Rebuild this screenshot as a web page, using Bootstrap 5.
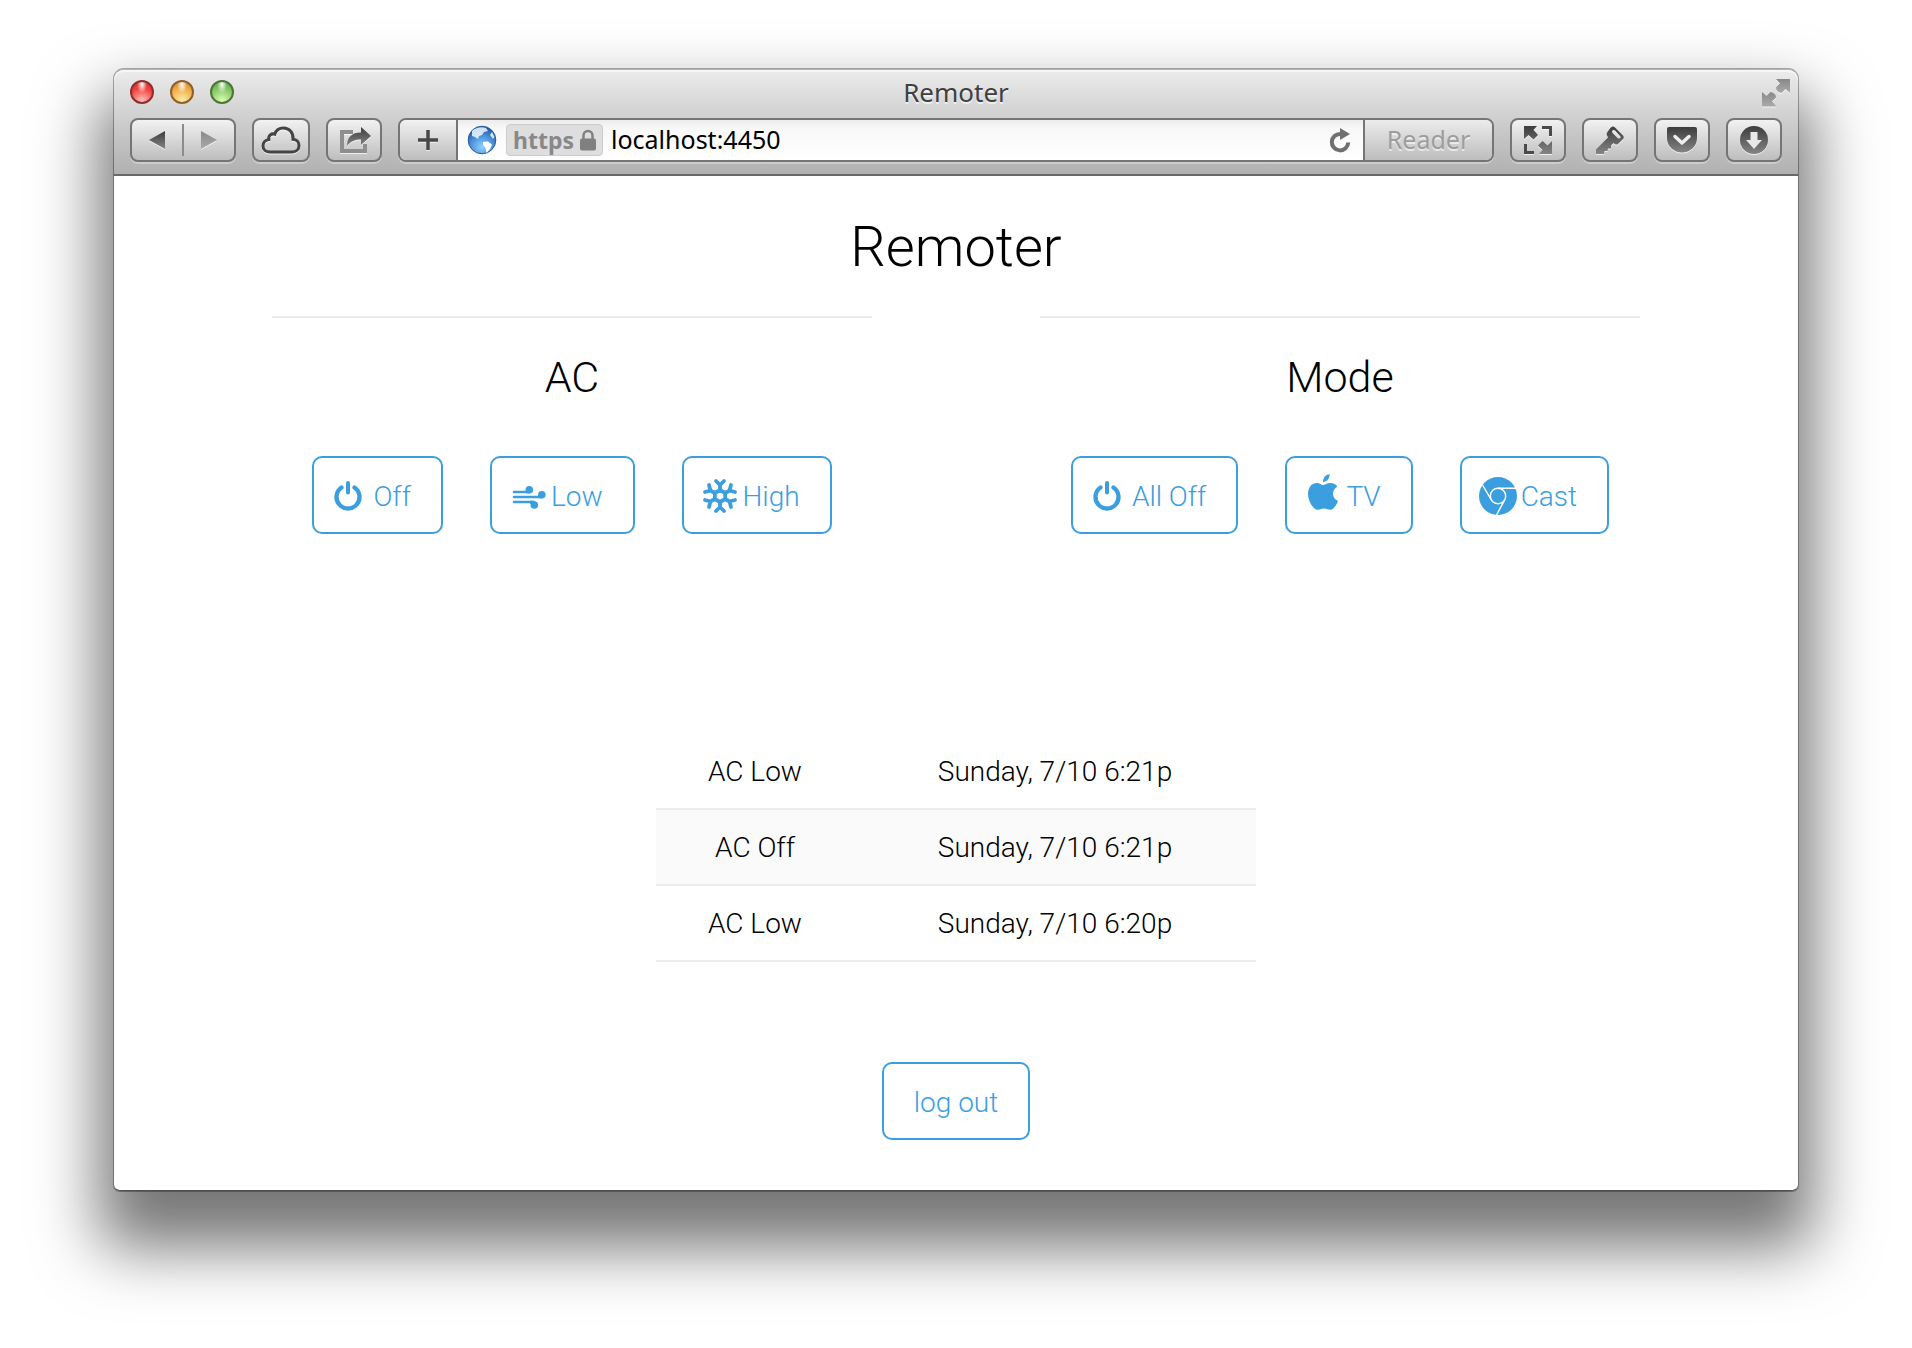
<!DOCTYPE html>
<html lang="en">
<head>
<meta charset="utf-8">
<meta name="viewport" content="width=device-width, initial-scale=1">
<title>Remoter</title>
<link href="https://cdn.jsdelivr.net/npm/bootstrap@5.3.0/dist/css/bootstrap.min.css" rel="stylesheet">
<style>
  body { background: #fff; color: #000; font-family: Roboto, "Liberation Sans", Arial, sans-serif; }
  .desk { padding: 69px 114px 156px; }
  .browser { border: 1px solid #777; border-color: #b4b4b4 #808080 #505050; border-width: 1px 0; border-radius: 10px 10px 6px 6px; background: #fff; box-shadow: 0 0 0 1px rgba(0,0,0,.3), 0 42px 64px 15px rgba(0,0,0,.54); }
  .chrome-top { background: linear-gradient(#ececec, #d0d0d0 45%, #b0b0b0); border-bottom: 2px solid #686868; border-radius: 10px 10px 0 0; box-shadow: inset 0 2px 0 #f6f6f6; font-family: "Noto Sans", "Open Sans", sans-serif; padding-bottom: 12px; }
  .title-row { height: 44px; margin-bottom: 4px; padding: 0 2px; }
  .title-row > div { flex: 1 0 0; }
  .light-red { margin-left: 14px; }
  .win-title { font-size: 26px; line-height: 44px; color: #404040; text-shadow: 0 2px 0 rgba(255,255,255,.6); }
  .light { width: 24px; height: 24px; border: 2px solid; border-radius: 50%; padding: 0; }
  .light-red { border-color: #8f2f2c; background: radial-gradient(ellipse at 50% 12%, #fff 0, rgba(255,255,255,0) 35%), radial-gradient(circle at 50% 95%, #ffc4c0, #f4433f 60%, #c9302c); }
  .light-yellow { border-color: #91602a; background: radial-gradient(ellipse at 50% 12%, #fff 0, rgba(255,255,255,0) 35%), radial-gradient(circle at 50% 95%, #fff0a8, #f0ae4b 60%, #cc7e2c); }
  .light-green { border-color: #4c7636; background: radial-gradient(ellipse at 50% 12%, #fff 0, rgba(255,255,255,0) 35%), radial-gradient(circle at 50% 95%, #dcffb8, #86c764 60%, #5b9a42); }
  .tool { height: 44px; width: 56px; border: 2px solid #757575; border-radius: 8px; background: linear-gradient(#f2f2f2, #bdbdbd); box-shadow: 0 2px 0 rgba(255,255,255,.3); padding: 0; }
  .tool-wide { width: 58px; }
  .nav-pair { width: 106px; overflow: hidden; }
  .nav-pair button { border: 0; background: none; padding: 0; }
  .pair-rule { width: 2px; height: 32px; background: #8c8c8c; }
  .address { height: 44px; border: 2px solid #757575; border-radius: 8px; background: linear-gradient(#ececec, #f8f8f8 20%, #fff); overflow: hidden; box-shadow: 0 2px 0 rgba(255,255,255,.3); font-size: 25px; }
  .address button { border: 0; background: none; padding: 0; }
  .address .btn-plus { width: 58px; border-right: 2px solid #757575; background: linear-gradient(#f2f2f2, #bdbdbd); }
  .address .btn-reader { width: 129px; border-left: 2px solid #757575; background: linear-gradient(#ececec, #bdbdbd); color: #9d9d9d; text-shadow: 0 2px 0 rgba(255,255,255,.6); }
  .address-main { padding: 0 12px 0 8px; }
  .https-tag { height: 32px; border: 1px solid #ccc; border-radius: 4px; background: #dedede; color: #888; font-size: 23px; font-weight: 700; line-height: 30px; padding: 0 6px; gap: 6px; }
  .url-field { border: 0; background: none; padding: 0; color: #000; min-width: 0; outline: 0; }
  svg { display: block; flex: none; }
  .engraved { filter: drop-shadow(0 1px 0 rgba(255,255,255,.7)); }

  .page { max-width: 1368px; padding-top: 38px; padding-bottom: 50px; }
  .page h1 { font-size: 56px; line-height: 67px; font-weight: 300; margin-bottom: 35px; }
  .page h2 { font-size: 43px; line-height: 50px; font-weight: 300; margin-bottom: 54px; }
  .panels { --bs-gutter-x: 168px; margin-bottom: 200px; }
  .panel-rule { border: 0; border-top: 2px solid #ececec; opacity: 1; margin: 0 0 34px; }
  .controls { gap: 47px; }
  .btn-remote { --bs-btn-color: #3a9edf; --bs-btn-border-color: #3a9edf; --bs-btn-hover-color: #fff; --bs-btn-hover-bg: #3a9edf; --bs-btn-border-width: 2px; --bs-btn-border-radius: 10px; --bs-btn-font-family: Roboto, "Liberation Sans", sans-serif; --bs-btn-font-size: 28px; --bs-btn-font-weight: 300; height: 78px; line-height: 42px; padding: 3px 30px 0; }
  .btn-icon { padding-left: 17px; gap: 2px; }
  .btn-icon svg { margin-bottom: 3px; }
  .history { max-width: 600px; margin-bottom: 100px; font-size: 28px; line-height: 42px; font-weight: 300; }
  .history td { padding: 17px 0 15px; border-bottom: 2px solid #ececec; color: #000; }
  .history td:first-child { width: 33%; }
  .history tr:nth-child(even) td { background: #fafafa; }
</style>
</head>
<body>
<svg width="0" height="0" class="position-absolute" aria-hidden="true">
  <defs>
    <linearGradient id="ink" x1="0" y1="0" x2="0" y2="1"><stop offset="0" stop-color="#3c3c3c"/><stop offset="1" stop-color="#858585"/></linearGradient>
    <linearGradient id="pale" x1="0" y1="0" x2="0" y2="1"><stop offset="0" stop-color="#888"/><stop offset="1" stop-color="#aaa"/></linearGradient>
    <radialGradient id="sea" cx=".5" cy=".75" r=".75"><stop offset="0" stop-color="#8fd0ff"/><stop offset=".55" stop-color="#4a90da"/><stop offset="1" stop-color="#20509a"/></radialGradient>
    <symbol id="power" viewBox="0 0 40 40"><path d="M10.500 12.500A11.500 11.500 0 1 0 23.500 12.500" fill="none" stroke="currentColor" stroke-width="4.300" stroke-linecap="round"/><path d="M17 8V17.500" stroke="currentColor" stroke-width="4" stroke-linecap="round"/></symbol>
  </defs>
</svg>
<div class="desk">
<div class="browser">
  <header class="chrome-top">
    <div class="title-row d-flex align-items-center">
      <div class="d-flex gap-3">
        <button class="light light-red" type="button" aria-label="Close"></button>
        <button class="light light-yellow" type="button" aria-label="Minimize"></button>
        <button class="light light-green" type="button" aria-label="Zoom"></button>
      </div>
      <span class="win-title">Remoter</span>
      <div class="d-flex justify-content-end">
        <svg class="engraved" width="36" height="32" viewBox="-2 -1 36 32" fill="url(#pale)"><path d="M14 2H28V16L23.500 12L19.500 16Q14 15 14 10.500L18 6.500Z"/><path d="M0 15L4.500 19L8.500 15Q14 16 14 20.500L10 24.500L14.500 29.500H0Z"/></svg>
      </div>
    </div>
    <div class="d-flex gap-3 px-3">
      <div class="tool nav-pair d-flex align-items-center">
        <button class="flex-fill d-flex justify-content-center" type="button" aria-label="Back"><svg class="engraved" width="18" height="20" viewBox="0 0 18 20"><path d="M1 10L17 1V19Z" fill="url(#ink)"/></svg></button>
        <span class="pair-rule"></span>
        <button class="flex-fill d-flex justify-content-center" type="button" aria-label="Forward"><svg class="engraved" width="18" height="20" viewBox="0 0 18 20"><path d="M17 10L1 1V19Z" fill="url(#pale)"/></svg></button>
      </div>
      <button class="tool tool-wide d-flex align-items-center justify-content-center" type="button" aria-label="iCloud tabs"><svg class="engraved" width="40" height="28" viewBox="0 0 40 28"><path d="M9 26H31C35.500 26 38 23 38 19.500C38 16 35.500 13.500 32 13.300C32.500 6.500 28 2 22.500 2C18 2 15 4.500 13.700 8.200C10.500 7 7.200 9.500 7.800 13.500C4.500 14 2 16.500 2 20C2 23.500 5 26 9 26Z" fill="none" stroke="#444" stroke-width="3"/></svg></button>
      <button class="tool d-flex align-items-center justify-content-center" type="button" aria-label="Share"><svg class="engraved" width="34" height="28" viewBox="-1 0 34 28"><path d="M15 6H4V25H27V18" fill="none" stroke="#8e8e8e" stroke-width="4"/><path d="M9 20C9 11 14 6.500 23 6.500V1L33 10L23 19V13.500C17 13.500 13 15 9 20Z" fill="url(#ink)"/></svg></button>
      <div class="address d-flex align-items-stretch flex-fill">
        <button class="btn-plus d-flex align-items-center justify-content-center" type="button" aria-label="Add bookmark"><svg class="engraved" width="20" height="20" viewBox="0 0 20 20"><path d="M10 0V20M0 10H20" stroke="#484848" stroke-width="3.500"/></svg></button>
        <div class="address-main d-flex align-items-center flex-fill gap-2">
          <svg width="32" height="32" viewBox="0 0 32 32"><circle cx="16" cy="16" r="13.800" fill="url(#sea)" stroke="#2a5a9c"/><path d="M6 7C10 3 16 2.500 20 4L22 7L18 8L16 11L13 12L12 15L9 13L6 12Z" fill="#eef7ff" opacity=".85"/><path d="M17 18L22 17.500L26 20.500L24 25L20.500 29L19.500 24L17 21Z" fill="#fff"/><path d="M26 8L28.500 13L27 15L24 11Z" fill="#cfe6fb"/></svg>
          <label class="https-tag d-flex align-items-center" for="url">https <svg width="16" height="22" viewBox="0 0 16 22"><path d="M3.500 11V6.500a4.500 4.500 0 0 1 9 0V11" fill="none" stroke="#808080" stroke-width="2.500"/><rect y="9.500" width="16" height="12" rx="2" fill="#808080"/></svg></label>
          <input class="url-field flex-fill" id="url" type="text" value="localhost:4450">
          <button type="button" aria-label="Reload"><svg width="22" height="26" viewBox="0 0 22 26"><path d="M11.500 7A8.200 8.200 0 1 0 19.200 15.500" fill="none" stroke="#707070" stroke-width="4"/><path d="M11 1L21 7L11 13Z" fill="#707070"/></svg></button>
        </div>
        <button class="btn-reader" type="button">Reader</button>
      </div>
      <button class="tool d-flex align-items-center justify-content-center" type="button" aria-label="Resize"><svg class="engraved" width="28" height="28" viewBox="0 0 28 28"><path d="M0 0H13L9.500 4L14 9L9.500 13.500L4.500 9L0 13ZM28 28H15L18.500 24L14 19.500L18.500 15L23.500 19.500L28 15Z" fill="url(#ink)"/><path d="M18 1.500H26.500V10M1.500 18V26.500H10" fill="none" stroke="#4a4a4a" stroke-width="3"/></svg></button>
      <button class="tool d-flex align-items-center justify-content-center" type="button" aria-label="Passwords"><svg class="engraved" width="28" height="28" viewBox="0 0 28 28"><path fill-rule="evenodd" d="M14 2.500Q16.500-1 19 1.500L27 9.500Q29 12 26 14L22 18Q20 19.500 17.500 17L15 19.500V22.500H12L11.500 25H8.500L8 28H0V23.500L12 11.500Q9.500 8 11.500 6ZM16.500 4.500Q15.500 6 17 7.500L21.500 12Q23 13 24.300 12Q25 11 24 10L19 4.500Q17.500 3.300 16.500 4.500Z" fill="url(#ink)"/></svg></button>
      <button class="tool d-flex align-items-center justify-content-center" type="button" aria-label="Pocket"><svg class="engraved" width="30" height="26" viewBox="0 0 30 26"><path d="M2 0H28Q30 0 30 2V11A15 14.500 0 0 1 0 11V2Q0 0 2 0Z" fill="url(#ink)"/><path d="M8 9.500L15 16L22 9.500" fill="none" stroke="#eee" stroke-width="3.500" stroke-linecap="round" stroke-linejoin="round"/></svg></button>
      <button class="tool d-flex align-items-center justify-content-center" type="button" aria-label="Downloads"><svg class="engraved" width="28" height="28" viewBox="0 0 28 28"><circle cx="14" cy="14" r="14" fill="url(#ink)"/><path d="M10.500 6H17.500V14H22L14 23L6 14H10.500Z" fill="#e8e8e8"/></svg></button>
    </div>
  </header>

  <main class="page container-fluid px-0 text-center">
    <h1>Remoter</h1>
    <div class="panels row row-cols-2">
      <section class="col">
        <hr class="panel-rule">
        <h2>AC</h2>
        <div class="controls d-flex justify-content-center">
          <button class="btn btn-remote btn-icon d-flex align-items-center" type="button"><svg width="40" height="40"><use href="#power"/></svg>Off</button>
          <button class="btn btn-remote btn-icon d-flex align-items-center" type="button"><svg width="40" height="40" viewBox="0 0 40 40" fill="currentColor"><path d="M5 17H20M5 22H32M5 27H24" fill="none" stroke="currentColor" stroke-width="2.600" stroke-linecap="round"/><path d="M21 18.300H17V15H24ZM33 23.300H29V20H36ZM25 25.700H21V29H28Z"/><circle cx="20.300" cy="14.800" r="3.800"/><circle cx="32.800" cy="19.800" r="3.800"/><circle cx="25.300" cy="30" r="3.800"/></svg>Low</button>
          <button class="btn btn-remote btn-icon d-flex align-items-center" type="button"><svg width="40" height="40" viewBox="-19 -21 40 40" fill="none" stroke="currentColor" stroke-width="3.800" stroke-linecap="round" stroke-linejoin="round"><path d="M0-6V-11.500M-4-15L0-11L4-15"/><path d="M0-6V-11.500M-4-15L0-11L4-15" transform="rotate(60)"/><path d="M0-6V-11.500M-4-15L0-11L4-15" transform="rotate(120)"/><path d="M0-6V-11.500M-4-15L0-11L4-15" transform="rotate(180)"/><path d="M0-6V-11.500M-4-15L0-11L4-15" transform="rotate(240)"/><path d="M0-6V-11.500M-4-15L0-11L4-15" transform="rotate(300)"/><path d="M0-6L5.200-3V3L0 6L-5.200 3V-3Z"/></svg>High</button>
        </div>
      </section>
      <section class="col">
        <hr class="panel-rule">
        <h2>Mode</h2>
        <div class="controls d-flex justify-content-center">
          <button class="btn btn-remote btn-icon d-flex align-items-center" type="button"><svg width="40" height="40"><use href="#power"/></svg>All Off</button>
          <button class="btn btn-remote btn-icon d-flex align-items-center" type="button"><svg width="40" height="40" viewBox="0 0 40 40" fill="currentColor" overflow="visible"><path d="M19 7C18.800 3 21.500-.3 25.500-1C26 3 23 6.800 19 7Z"/><path d="M19 10C21 10 23 8 26.500 8C29.500 8 32 9.500 33.300 11.500C27 15.500 28 23.500 34 26C32.500 30 29.500 34.800 26.300 34.800C24 34.800 23 33.500 20 33.500C17 33.500 16 34.800 13.800 34.800C9 34.800 4 26 4 18.800C4 12 8.300 8 12.800 8C15.500 8 17.500 10 19 10Z"/></svg>TV</button>
          <button class="btn btn-remote btn-icon d-flex align-items-center" type="button"><svg width="40" height="40" viewBox="-19 -21 40 40"><circle r="19" fill="currentColor"/><g fill="none" stroke="#fff" stroke-width="1.400"><circle r="7.700"/><path d="M0-7.700H18M6.700 3.900L-1.500 19M-6.700 3.900L-15.500-11"/></g></svg>Cast</button>
        </div>
      </section>
    </div>
    <table class="history table mx-auto align-middle">
      <tbody>
        <tr><td>AC Low</td><td>Sunday, 7/10 6:21p</td></tr>
        <tr><td>AC Off</td><td>Sunday, 7/10 6:21p</td></tr>
        <tr><td>AC Low</td><td>Sunday, 7/10 6:20p</td></tr>
      </tbody>
    </table>
    <button class="btn btn-remote" type="button">log out</button>
  </main>
</div>
</div>
<script src="https://cdn.jsdelivr.net/npm/bootstrap@5.3.0/dist/js/bootstrap.bundle.min.js"></script>
</body>
</html>
